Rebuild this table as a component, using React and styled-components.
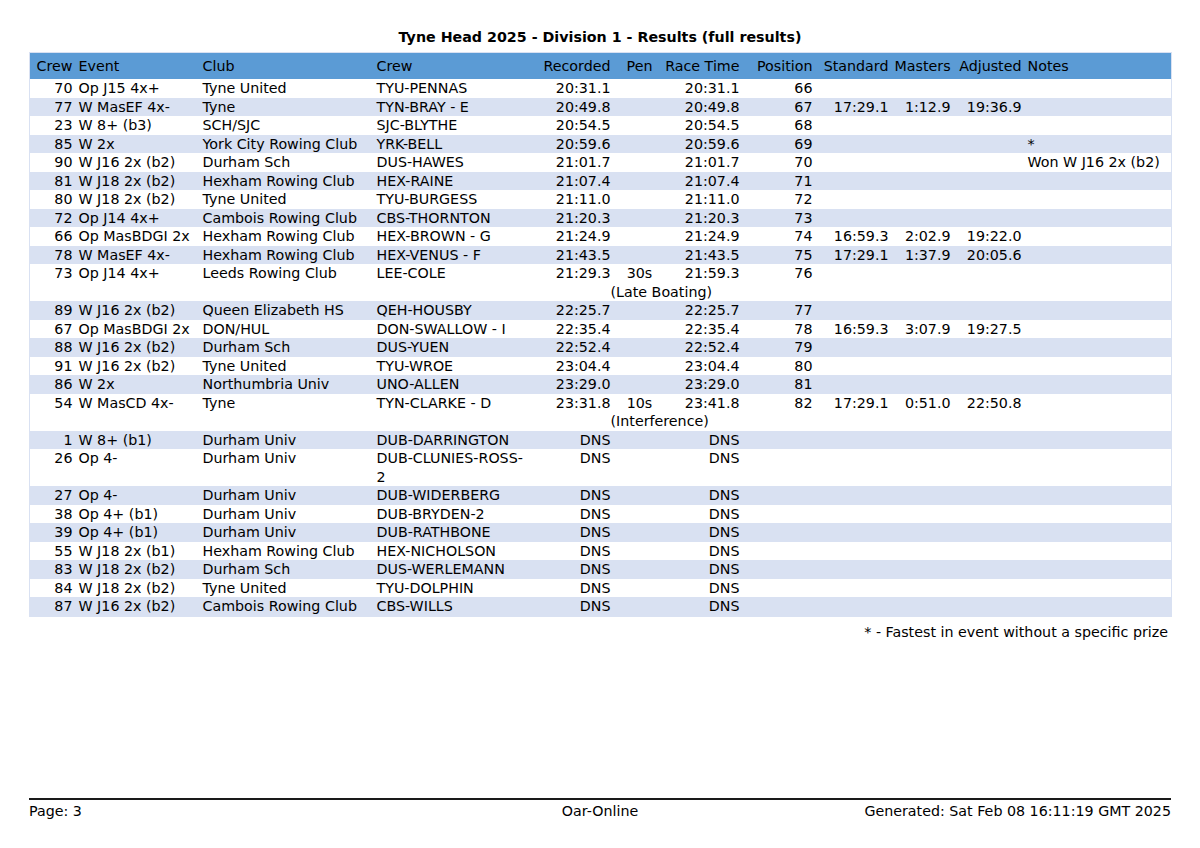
import React from 'react';
import styled, {createGlobalStyle} from 'styled-components';

const GlobalStyle = createGlobalStyle`
  html, body {
    margin: 0;
    padding: 0;
    background: #ffffff;
  }
  body {
    font-family: "DejaVu Sans", "Liberation Sans", sans-serif;
    color: #000000;
  }
`;

const Page = styled.div`
  width: 1200px;
  height: 848px;
  box-sizing: border-box;
  padding: 28px 29px 27px 29px;
  display: flex;
  flex-direction: column;
`;

const Title = styled.h1`
  margin: 0 0 6px 0;
  font-size: 14.25px;
  font-weight: bold;
  line-height: 18px;
  text-align: center;
`;

const Table = styled.table`
  width: 1142px;
  table-layout: fixed;
  border-collapse: collapse;
  border: 1px solid #d9e1f2;
  font-size: 14.25px;
`;

const HeadRow = styled.tr`
  background: #5b9bd5;
`;

const Th = styled.th`
  font-weight: normal;
  line-height: 26px;
  padding: 0 3px 0 ${(p) => p.$padLeft || 3}px;
  text-align: ${(p) => p.$align || 'left'};
  white-space: nowrap;
`;

const Row = styled.tr`
  background: ${(p) => (p.$alt ? '#d9e1f2' : '#ffffff')};
`;

const Td = styled.td`
  line-height: 18.5px;
  padding: 0 3px 0 ${(p) => p.$padLeft || 3}px;
  vertical-align: top;
  text-align: ${(p) => p.$align || 'left'};
`;

const NoteCell = styled.td`
  line-height: 18.5px;
  padding: 0;
  text-indent: -3px;
  white-space: nowrap;
`;

const Footnote = styled.div`
  margin-top: 6px;
  font-size: 14.25px;
  line-height: 18px;
  text-align: right;
  padding-right: 3px;
`;

const Footer = styled.div`
  margin-top: auto;
  border-top: 2px solid #1a1a1a;
  display: grid;
  grid-template-columns: 1fr auto 1fr;
  font-size: 14.25px;
  line-height: 20px;
  padding-top: 1px;
`;

const FootLeft = styled.span`
  text-align: left;
`;

const FootMid = styled.span`
  text-align: center;
`;

const FootRight = styled.span`
  text-align: right;
`;

const widths = [46, 124, 174, 156, 84, 48, 81, 73, 76, 62, 71, 147];

const columns = [
  {label: 'Crew', align: 'right'},
  {label: 'Event'},
  {label: 'Club'},
  {label: 'Crew'},
  {label: 'Recorded', align: 'right'},
  {label: 'Pen', align: 'center', padLeft: 7},
  {label: 'Race Time', align: 'right'},
  {label: 'Position', align: 'right'},
  {label: 'Standard', align: 'right'},
  {label: 'Masters', align: 'right'},
  {label: 'Adjusted', align: 'right'},
  {label: 'Notes'},
];

// crew, event, club, crew name, recorded, pen, race time, position, standard, masters, adjusted, notes, reason
const results = [
  ['70', 'Op J15 4x+', 'Tyne United', 'TYU-PENNAS', '20:31.1', '', '20:31.1', '66'],
  ['77', 'W MasEF 4x-', 'Tyne', 'TYN-BRAY - E', '20:49.8', '', '20:49.8', '67', '17:29.1', '1:12.9', '19:36.9'],
  ['23', 'W 8+ (b3)', 'SCH/SJC', 'SJC-BLYTHE', '20:54.5', '', '20:54.5', '68'],
  ['85', 'W 2x', 'York City Rowing Club', 'YRK-BELL', '20:59.6', '', '20:59.6', '69', '', '', '', '*'],
  ['90', 'W J16 2x (b2)', 'Durham Sch', 'DUS-HAWES', '21:01.7', '', '21:01.7', '70', '', '', '', 'Won W J16 2x (b2)'],
  ['81', 'W J18 2x (b2)', 'Hexham Rowing Club', 'HEX-RAINE', '21:07.4', '', '21:07.4', '71'],
  ['80', 'W J18 2x (b2)', 'Tyne United', 'TYU-BURGESS', '21:11.0', '', '21:11.0', '72'],
  ['72', 'Op J14 4x+', 'Cambois Rowing Club', 'CBS-THORNTON', '21:20.3', '', '21:20.3', '73'],
  ['66', 'Op MasBDGI 2x', 'Hexham Rowing Club', 'HEX-BROWN - G', '21:24.9', '', '21:24.9', '74', '16:59.3', '2:02.9', '19:22.0'],
  ['78', 'W MasEF 4x-', 'Hexham Rowing Club', 'HEX-VENUS - F', '21:43.5', '', '21:43.5', '75', '17:29.1', '1:37.9', '20:05.6'],
  ['73', 'Op J14 4x+', 'Leeds Rowing Club', 'LEE-COLE', '21:29.3', '30s', '21:59.3', '76', '', '', '', '', '(Late Boating)'],
  ['89', 'W J16 2x (b2)', 'Queen Elizabeth HS', 'QEH-HOUSBY', '22:25.7', '', '22:25.7', '77'],
  ['67', 'Op MasBDGI 2x', 'DON/HUL', 'DON-SWALLOW - I', '22:35.4', '', '22:35.4', '78', '16:59.3', '3:07.9', '19:27.5'],
  ['88', 'W J16 2x (b2)', 'Durham Sch', 'DUS-YUEN', '22:52.4', '', '22:52.4', '79'],
  ['91', 'W J16 2x (b2)', 'Tyne United', 'TYU-WROE', '23:04.4', '', '23:04.4', '80'],
  ['86', 'W 2x', 'Northumbria Univ', 'UNO-ALLEN', '23:29.0', '', '23:29.0', '81'],
  ['54', 'W MasCD 4x-', 'Tyne', 'TYN-CLARKE - D', '23:31.8', '10s', '23:41.8', '82', '17:29.1', '0:51.0', '22:50.8', '', '(Interference)'],
  ['1', 'W 8+ (b1)', 'Durham Univ', 'DUB-DARRINGTON', 'DNS', '', 'DNS'],
  ['26', 'Op 4-', 'Durham Univ', 'DUB-CLUNIES-ROSS-2', 'DNS', '', 'DNS'],
  ['27', 'Op 4-', 'Durham Univ', 'DUB-WIDERBERG', 'DNS', '', 'DNS'],
  ['38', 'Op 4+ (b1)', 'Durham Univ', 'DUB-BRYDEN-2', 'DNS', '', 'DNS'],
  ['39', 'Op 4+ (b1)', 'Durham Univ', 'DUB-RATHBONE', 'DNS', '', 'DNS'],
  ['55', 'W J18 2x (b1)', 'Hexham Rowing Club', 'HEX-NICHOLSON', 'DNS', '', 'DNS'],
  ['83', 'W J18 2x (b2)', 'Durham Sch', 'DUS-WERLEMANN', 'DNS', '', 'DNS'],
  ['84', 'W J18 2x (b2)', 'Tyne United', 'TYU-DOLPHIN', 'DNS', '', 'DNS'],
  ['87', 'W J16 2x (b2)', 'Cambois Rowing Club', 'CBS-WILLS', 'DNS', '', 'DNS'],
];

const ResultRows = ({row, alt}) => {
  const reason = row[12];
  return (
    <>
      <Row $alt={alt}>
        {columns.map((col, i) => (
          <Td key={i} $align={col.align} $padLeft={col.padLeft}>
            {row[i] || ''}
          </Td>
        ))}
      </Row>
      {reason && (
        <Row $alt={alt}>
          <Td colSpan={5} />
          <NoteCell colSpan={7}>{reason}</NoteCell>
        </Row>
      )}
    </>
  );
};

const App = () => {
  return (
    <>
      <GlobalStyle />
      <Page>
        <Title>Tyne Head 2025 - Division 1 - Results (full results)</Title>
        <Table>
          <colgroup>
            {widths.map((w, i) => (
              <col key={i} style={{width: w}} />
            ))}
          </colgroup>
          <thead>
            <HeadRow>
              {columns.map((col, i) => (
                <Th key={i} $align={col.align} $padLeft={col.padLeft}>
                  {col.label}
                </Th>
              ))}
            </HeadRow>
          </thead>
          <tbody>
            {results.map((row, i) => (
              <ResultRows key={row[0]} row={row} alt={i % 2 === 1} />
            ))}
          </tbody>
        </Table>
        <Footnote>* - Fastest in event without a specific prize</Footnote>
        <Footer>
          <FootLeft>Page: 3</FootLeft>
          <FootMid>Oar-Online</FootMid>
          <FootRight>Generated: Sat Feb 08 16:11:19 GMT 2025</FootRight>
        </Footer>
      </Page>
    </>
  );
};

export default App;
